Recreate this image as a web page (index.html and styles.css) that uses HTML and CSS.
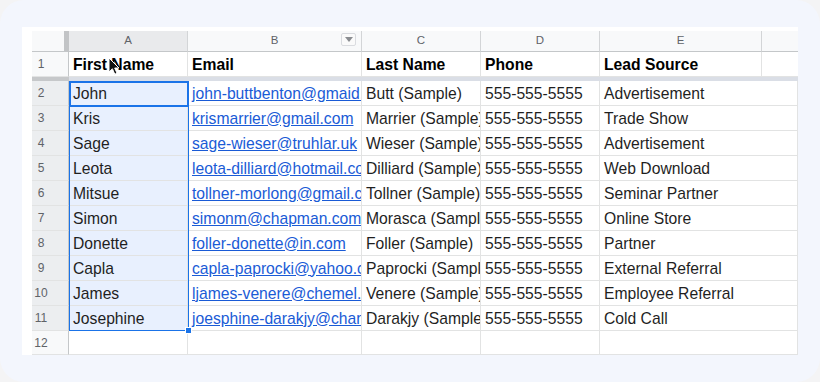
FILE: index.html
```html
<!DOCTYPE html>
<html>
<head>
<meta charset="utf-8">
<link rel="stylesheet" href="styles.css">
</head>
<body>
<div class="panel">
  <div class="card">
    <div class="sheet">
      <div class="corner"></div>
      <div class="colhead sel-h">A</div>
      <div class="colhead">B<span class="filter"><svg width="8" height="5" viewBox="0 0 8 5"><path d="M0 0H8L4 5Z" fill="#8a8d91"/></svg></span></div>
      <div class="colhead">C</div>
      <div class="colhead">D</div>
      <div class="colhead">E</div>
      <div class="colhead last"></div>

      <div class="rowhead">1</div>
      <div class="cell b">First Name</div>
      <div class="cell b">Email</div>
      <div class="cell b">Last Name</div>
      <div class="cell b">Phone</div>
      <div class="cell b">Lead Source</div>
      <div class="cell"></div>

      <div class="freeze"><div class="freeze-h"></div><div class="freeze-c"></div></div>

      <div class="rowhead sel-h">2</div>
      <div class="cell sel">John</div>
      <div class="cell"><a>john-buttbenton@gmaid.com</a></div>
      <div class="cell">Butt (Sample)</div>
      <div class="cell">555-555-5555</div>
      <div class="cell">Advertisement</div>
      <div class="cell"></div>

      <div class="rowhead sel-h">3</div>
      <div class="cell sel">Kris</div>
      <div class="cell"><a>krismarrier@gmail.com</a></div>
      <div class="cell">Marrier (Sample)</div>
      <div class="cell">555-555-5555</div>
      <div class="cell">Trade Show</div>
      <div class="cell"></div>

      <div class="rowhead sel-h">4</div>
      <div class="cell sel">Sage</div>
      <div class="cell"><a>sage-wieser@truhlar.uk</a></div>
      <div class="cell">Wieser (Sample)</div>
      <div class="cell">555-555-5555</div>
      <div class="cell">Advertisement</div>
      <div class="cell"></div>

      <div class="rowhead sel-h">5</div>
      <div class="cell sel">Leota</div>
      <div class="cell"><a>leota-dilliard@hotmail.com</a></div>
      <div class="cell">Dilliard (Sample)</div>
      <div class="cell">555-555-5555</div>
      <div class="cell">Web Download</div>
      <div class="cell"></div>

      <div class="rowhead sel-h">6</div>
      <div class="cell sel">Mitsue</div>
      <div class="cell"><a>tollner-morlong@gmail.com</a></div>
      <div class="cell">Tollner (Sample)</div>
      <div class="cell">555-555-5555</div>
      <div class="cell">Seminar Partner</div>
      <div class="cell"></div>

      <div class="rowhead sel-h">7</div>
      <div class="cell sel">Simon</div>
      <div class="cell"><a>simonm@chapman.com</a></div>
      <div class="cell">Morasca (Sample)</div>
      <div class="cell">555-555-5555</div>
      <div class="cell">Online Store</div>
      <div class="cell"></div>

      <div class="rowhead sel-h">8</div>
      <div class="cell sel">Donette</div>
      <div class="cell"><a>foller-donette@in.com</a></div>
      <div class="cell">Foller (Sample)</div>
      <div class="cell">555-555-5555</div>
      <div class="cell">Partner</div>
      <div class="cell"></div>

      <div class="rowhead sel-h">9</div>
      <div class="cell sel">Capla</div>
      <div class="cell"><a>capla-paprocki@yahoo.com</a></div>
      <div class="cell">Paprocki (Sample)</div>
      <div class="cell">555-555-5555</div>
      <div class="cell">External Referral</div>
      <div class="cell"></div>

      <div class="rowhead sel-h">10</div>
      <div class="cell sel">James</div>
      <div class="cell"><a>ljames-venere@chemel.com</a></div>
      <div class="cell">Venere (Sample)</div>
      <div class="cell">555-555-5555</div>
      <div class="cell">Employee Referral</div>
      <div class="cell"></div>

      <div class="rowhead sel-h">11</div>
      <div class="cell sel">Josephine</div>
      <div class="cell"><a>joesphine-darakjy@chanay.com</a></div>
      <div class="cell">Darakjy (Sample)</div>
      <div class="cell">555-555-5555</div>
      <div class="cell">Cold Call</div>
      <div class="cell"></div>

      <div class="rowhead">12</div>
      <div class="cell"></div>
      <div class="cell"></div>
      <div class="cell"></div>
      <div class="cell"></div>
      <div class="cell"></div>
      <div class="cell"></div>

      <div class="selection"></div>
      <div class="active"></div>
      <div class="handle"></div>
      <svg class="cursor" width="13" height="19" viewBox="0 0 13 19"><path d="M1 1V15L4.4 11.8L6.8 17.2L9 16.2L6.7 11H11Z" fill="#111" stroke="#fff" stroke-width="1"/></svg>
    </div>
  </div>
</div>
</body>
</html>
```

FILE: styles.css
```css
* { box-sizing: border-box; }
html, body { margin: 0; padding: 0; }
body {
  width: 820px;
  height: 382px;
  background: #f4f4f5;
  overflow: hidden;
  font-family: "Liberation Sans", Arial, sans-serif;
}
.panel {
  width: 820px;
  height: 382px;
  background: #f3f6fd;
  border-radius: 24px;
  padding: 27px 22px 27px 22px;
}
.card {
  background: #ffffff;
  width: 776px;
  height: 328px;
  padding: 4px 0 0 10px;
  overflow: hidden;
}
.sheet {
  position: relative;
  display: grid;
  grid-template-columns: 37px 119px 174px 119px 119px 162px 36px;
  grid-template-rows: 21px 25px 4px repeat(10, 25px) 24px;
  width: 766px;
}
.corner {
  background: #f8f9fa;
  border-right: 5px solid #c2c4c6;
  border-bottom: 1px solid #c4c7c9;
}
.colhead {
  position: relative;
  background: #f8f9fa;
  border-right: 1px solid #d3d5d7;
  border-bottom: 1px solid #c4c7c9;
  color: #5f6368;
  font-size: 11.5px;
  text-align: center;
  line-height: 16px;
  padding-top: 1px;
}
.colhead.sel-h { background: #e9eaec; }
.colhead.last { border-right: none; }
.filter {
  position: absolute;
  right: 5px;
  top: 2px;
  width: 15px;
  height: 13px;
  border: 1px solid #dadce0;
  border-radius: 2px;
  background: #fafafa;
  display: flex;
  align-items: center;
  justify-content: center;
}
.rowhead {
  background: #f8f9fa;
  border-right: 1px solid #c4c7c9;
  border-bottom: 1px solid #e2e3e3;
  color: #5f6368;
  font-size: 12px;
  display: flex;
  align-items: center;
  justify-content: center;
  padding-right: 18px;
}
.rowhead.sel-h { background: #eceef0; }
.cell {
  border-right: 1px solid #e2e3e3;
  border-bottom: 1px solid #e2e3e3;
  font-size: 15.7px;
  color: #1f1f1f;
  white-space: nowrap;
  overflow: hidden;
  padding-left: 4px;
  padding-top: 1px;
  display: flex;
  align-items: center;
}
.cell:nth-child(7n) { border-right: none; }
.cell.b { font-weight: bold; color: #000; }
.cell.sel { background: #e8f0fe; }
.cell a {
  color: #1a5bd6;
  text-decoration: underline;
}
.freeze {
  grid-column: 1 / -1;
  display: flex;
}
.freeze-h { width: 37px; background: #c6c8ca; }
.freeze-c { flex: 1; background: #dadee6; }
.selection {
  position: absolute;
  left: 37px;
  top: 50px;
  width: 120px;
  height: 250px;
  border: 1px solid #1a73e8;
  pointer-events: none;
}
.active {
  position: absolute;
  left: 37px;
  top: 50px;
  width: 120px;
  height: 26px;
  border: 2px solid #1a73e8;
}
.handle {
  position: absolute;
  left: 153px;
  top: 296px;
  width: 7px;
  height: 7px;
  background: #1a73e8;
  border: 1px solid #fff;
}
.cursor {
  position: absolute;
  left: 76px;
  top: 26px;
}
```
